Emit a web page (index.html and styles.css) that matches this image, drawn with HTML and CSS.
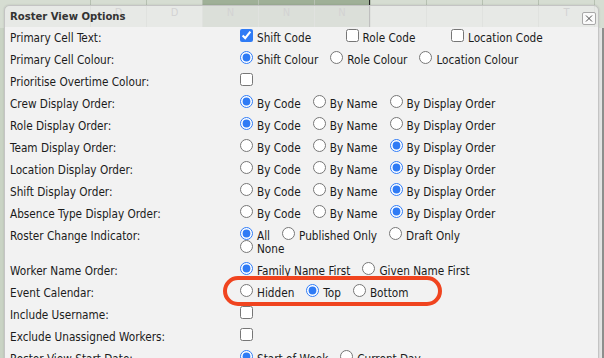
FILE: index.html
```html
<!DOCTYPE html>
<html lang="en">
<head>
    <meta charset="UTF-8">
    <meta name="viewport" content="width=device-width, initial-scale=1.0">
    <title>Roster View Options</title>
    <link rel="stylesheet" href="styles.css">
</head>
<body>
    <div class="roster">
        <div class="roster-head">
            <div class="day">D</div>
            <div class="day">D</div>
            <div class="day sel">N</div>
            <div class="day sel">N</div>
            <div class="day sel last">N</div>
            <div class="day"></div>
            <div class="day"></div>
            <div class="day"></div>
            <div class="day">T</div>
            <div class="day"></div>
        </div>
        <div class="roster-rows"></div>
    </div>

    <div class="dialog">
        <div class="dialog-title">
            <span>Roster View Options</span>
            <button class="close" type="button" aria-label="Close">
                <svg width="14" height="13" viewBox="0 0 14 13">
                    <path d="M3.5 3 L10.5 10 M10.5 3 L3.5 10" stroke="#444" stroke-width="1.1" fill="none"/>
                </svg>
            </button>
        </div>

        <div class="dialog-body">
            <div class="opt-row">
                <div class="opt-label">Primary Cell Text:</div>
                <div class="opt-controls">
                    <label class="choice fixed"><input type="checkbox" checked>Shift Code</label>
                    <label class="choice fixed"><input type="checkbox">Role Code</label>
                    <label class="choice fixed"><input type="checkbox">Location Code</label>
                </div>
            </div>
            <div class="opt-row">
                <div class="opt-label">Primary Cell Colour:</div>
                <div class="opt-controls">
                    <label class="choice"><input type="radio" name="colour" checked>Shift Colour</label>
                    <label class="choice"><input type="radio" name="colour">Role Colour</label>
                    <label class="choice"><input type="radio" name="colour">Location Colour</label>
                </div>
            </div>
            <div class="opt-row">
                <div class="opt-label">Prioritise Overtime Colour:</div>
                <div class="opt-controls">
                    <label class="choice"><input type="checkbox"></label>
                </div>
            </div>
            <div class="opt-row">
                <div class="opt-label">Crew Display Order:</div>
                <div class="opt-controls">
                    <label class="choice"><input type="radio" name="crew" checked>By Code</label>
                    <label class="choice"><input type="radio" name="crew">By Name</label>
                    <label class="choice"><input type="radio" name="crew">By Display Order</label>
                </div>
            </div>
            <div class="opt-row">
                <div class="opt-label">Role Display Order:</div>
                <div class="opt-controls">
                    <label class="choice"><input type="radio" name="role" checked>By Code</label>
                    <label class="choice"><input type="radio" name="role">By Name</label>
                    <label class="choice"><input type="radio" name="role">By Display Order</label>
                </div>
            </div>
            <div class="opt-row">
                <div class="opt-label">Team Display Order:</div>
                <div class="opt-controls">
                    <label class="choice"><input type="radio" name="team">By Code</label>
                    <label class="choice"><input type="radio" name="team">By Name</label>
                    <label class="choice"><input type="radio" name="team" checked>By Display Order</label>
                </div>
            </div>
            <div class="opt-row">
                <div class="opt-label">Location Display Order:</div>
                <div class="opt-controls">
                    <label class="choice"><input type="radio" name="location">By Code</label>
                    <label class="choice"><input type="radio" name="location">By Name</label>
                    <label class="choice"><input type="radio" name="location" checked>By Display Order</label>
                </div>
            </div>
            <div class="opt-row">
                <div class="opt-label">Shift Display Order:</div>
                <div class="opt-controls">
                    <label class="choice"><input type="radio" name="shift">By Code</label>
                    <label class="choice"><input type="radio" name="shift">By Name</label>
                    <label class="choice"><input type="radio" name="shift" checked>By Display Order</label>
                </div>
            </div>
            <div class="opt-row">
                <div class="opt-label">Absence Type Display Order:</div>
                <div class="opt-controls">
                    <label class="choice"><input type="radio" name="absence">By Code</label>
                    <label class="choice"><input type="radio" name="absence">By Name</label>
                    <label class="choice"><input type="radio" name="absence" checked>By Display Order</label>
                </div>
            </div>
            <div class="opt-row">
                <div class="opt-label">Roster Change Indicator:</div>
                <div class="opt-controls">
                    <label class="choice"><input type="radio" name="change" checked>All</label>
                    <label class="choice"><input type="radio" name="change">Published Only</label>
                    <label class="choice"><input type="radio" name="change">Draft Only</label>
                    <span class="break"></span>
                    <label class="choice"><input type="radio" name="change">None</label>
                </div>
            </div>
            <div class="opt-row">
                <div class="opt-label">Worker Name Order:</div>
                <div class="opt-controls">
                    <label class="choice"><input type="radio" name="worker" checked>Family Name First</label>
                    <label class="choice"><input type="radio" name="worker">Given Name First</label>
                </div>
            </div>
            <div class="opt-row">
                <div class="opt-label">Event Calendar:</div>
                <div class="opt-controls">
                    <label class="choice"><input type="radio" name="calendar">Hidden</label>
                    <label class="choice"><input type="radio" name="calendar" checked>Top</label>
                    <label class="choice"><input type="radio" name="calendar">Bottom</label>
                </div>
            </div>
            <div class="opt-row">
                <div class="opt-label">Include Username:</div>
                <div class="opt-controls">
                    <label class="choice"><input type="checkbox"></label>
                </div>
            </div>
            <div class="opt-row">
                <div class="opt-label">Exclude Unassigned Workers:</div>
                <div class="opt-controls">
                    <label class="choice"><input type="checkbox"></label>
                </div>
            </div>
            <div class="opt-row">
                <div class="opt-label">Roster View Start Date:</div>
                <div class="opt-controls">
                    <label class="choice"><input type="radio" name="start" checked>Start of Week</label>
                    <label class="choice"><input type="radio" name="start">Current Day</label>
                </div>
            </div>
        </div>

        <!-- annotation round the Event Calendar options -->
        <div class="highlight"></div>
    </div>
</body>
</html>
```

FILE: styles.css
```css
body {
    margin: 0;
    padding: 0;
    overflow: hidden;
    font-family: 'DejaVu Sans Condensed', 'DejaVu Sans', sans-serif;
    color: #1b1b1b;
    background-color: #e6e6e6;
}

.roster {
    height: 358px;
    display: flex;
    flex-direction: column;
}

.roster-head {
    display: flex;
    height: 28px;
    padding-left: 90px;
    background: #d6ddd2;
}

.roster-head .day {
    flex: 0 0 56px;
    box-sizing: border-box;
    border-left: 1px solid #b7c1b2;
    text-align: center;
    font-size: 11px;
    line-height: 25px;
    color: #777;
}

.roster-head .day.sel {
    background: #9fb097;
}

.roster-head .day.last {
    border-right: 1px solid #222;
}

.roster-rows {
    flex: 1;
    background: linear-gradient(to right, #c9d3c4 0 4px, #e4e4e4 4px calc(100% - 2px), #8d8f8d calc(100% - 2px));
}

.dialog {
    position: absolute;
    left: 4px;
    top: 5px;
    right: 5px;
    bottom: -20px;
    display: flex;
    flex-direction: column;
    border: 1px solid #c4c4c4;
    border-radius: 5px 5px 0 0;
    box-shadow: 0 0 2px rgba(0,0,0,0.15);
}

.dialog-title {
    display: flex;
    justify-content: space-between;
    align-items: center;
    height: 21px;
    padding: 0 2px 0 5px;
    border-radius: 5px 5px 0 0;
    background: rgba(236,236,236,0.78);
    font-size: 11.2px;
    font-weight: bold;
    color: #333;
}

.close {
    width: 14px;
    height: 13px;
    padding: 0;
    margin: 3px 0 0 0;
    border: 1px solid #a8a8a8;
    border-radius: 2px;
    background: #fafafa;
    display: flex;
    align-items: center;
    justify-content: center;
}

.close svg {
    display: block;
}

.dialog-body {
    flex: 1;
    padding: 0 0 0 5px;
    background: #f2f2f2;
}

.opt-row {
    display: grid;
    grid-template-columns: 230px 1fr;
    padding: 4.5px 0;
    font-size: 11.7px;
    line-height: 13px;
}

.opt-controls {
    display: flex;
    flex-wrap: wrap;
    column-gap: 12px;
}

.choice {
    display: flex;
    align-items: center;
    gap: 4px;
    height: 13px;
    white-space: nowrap;
}

.choice.fixed {
    width: 93.5px;
}

.choice input {
    width: 13px;
    height: 13px;
    margin: 0 0 5px 0;
    accent-color: #2f7bf5;
}

.break {
    flex-basis: 100%;
    height: 0;
}

.highlight {
    position: absolute;
    left: 218px;
    top: 270px;
    width: 211px;
    height: 22px;
    border: 4px solid #f0441f;
    border-radius: 15px;
}
```
